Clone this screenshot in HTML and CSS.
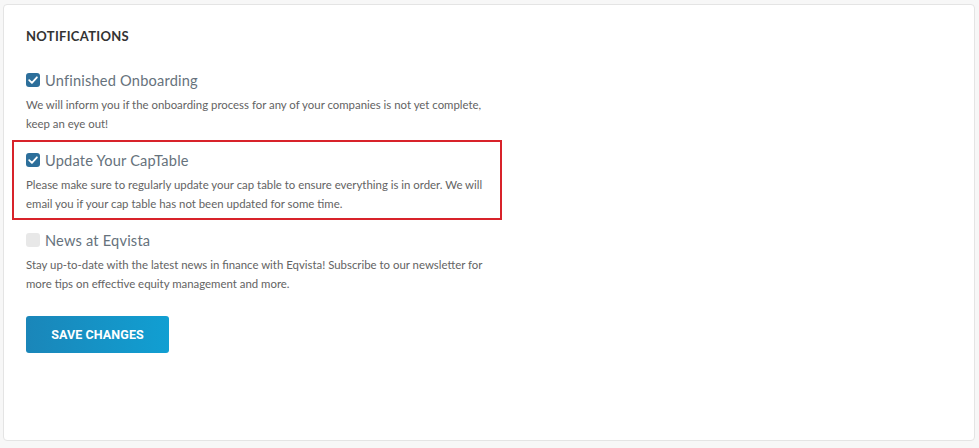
FILE: index.html
```html
<!DOCTYPE html>
<html lang="en">
<head>
<meta charset="utf-8">
<title>Notifications</title>
<link rel="stylesheet" href="styles.css">
</head>
<body>
<main class="card">
  <h2 class="title">NOTIFICATIONS</h2>
  <div class="items">
    <section class="item">
      <label class="label">
        <span class="box checked"><svg viewBox="0 0 14 14" width="14" height="14"><path d="M3.2 7.2 L5.9 9.9 L10.9 4.3" fill="none" stroke="#fff" stroke-width="1.8" stroke-linecap="round" stroke-linejoin="round"/></svg></span>
        Unfinished Onboarding
      </label>
      <p class="desc">We will inform you if the onboarding process for any of your companies is not yet complete, keep an eye out!</p>
    </section>
    <section class="item highlight">
      <label class="label">
        <span class="box checked"><svg viewBox="0 0 14 14" width="14" height="14"><path d="M3.2 7.2 L5.9 9.9 L10.9 4.3" fill="none" stroke="#fff" stroke-width="1.8" stroke-linecap="round" stroke-linejoin="round"/></svg></span>
        Update Your CapTable
      </label>
      <p class="desc">Please make sure to regularly update your cap table to ensure everything is in order. We will email you if your cap table has not been updated for some time.</p>
    </section>
    <section class="item">
      <label class="label">
        <span class="box"></span>
        News at Eqvista
      </label>
      <p class="desc">Stay up-to-date with the latest news in finance with Eqvista! Subscribe to our newsletter for more tips on effective equity management and more.</p>
    </section>
  </div>
  <button class="save" type="button">SAVE CHANGES</button>
</main>
</body>
</html>
```
FILE: styles.css
```css
* { box-sizing: border-box; }
html, body { margin: 0; padding: 0; background: #f7f7f7; }
body {
  width: 979px;
  height: 448px;
  padding: 4px 4px 7px 3px;
  font-family: Lato, "Open Sans", sans-serif;
}
.card {
  height: 437px;
  background: #fff;
  border: 1px solid #e4e4e4;
  border-radius: 4px;
  padding: 22px 0 0 8px;
  display: flex;
  flex-direction: column;
  align-items: flex-start;
}
.title {
  margin: 0 0 15px 14px;
  font-size: 13px;
  line-height: 18px;
  font-weight: 700;
  letter-spacing: 0.3px;
  color: #333;
}
.items { display: flex; flex-direction: column; }
.item {
  width: 490px;
  border: 2px solid transparent;
  padding: 7px 12px 5px 12px;
  display: flex;
  flex-direction: column;
  gap: 4px;
}
.item.highlight { border-color: #d8232a; }
.label {
  display: flex;
  align-items: center;
  gap: 5px;
  height: 22px;
  font-size: 14.6px;
  color: #66727c;
  letter-spacing: 0.2px;
}
.box {
  width: 14px;
  height: 14px;
  border-radius: 3px;
  background: #e8e8e8;
  display: inline-flex;
  flex: none;
}
.box.checked { background: #2d6f9b; }
.desc {
  margin: 0;
  font-size: 11.4px;
  line-height: 19px;
  color: #636363;
}
.save {
  margin: 16px 0 0 14px;
  width: 143px;
  height: 37px;
  border: 0;
  border-radius: 3px;
  background: linear-gradient(90deg, #1a86b9, #119fd2);
  color: #fff;
  font-family: Roboto, "Liberation Sans", sans-serif;
  font-weight: 700;
  font-size: 12.5px;
  letter-spacing: 0.1px;
  cursor: pointer;
}
```
